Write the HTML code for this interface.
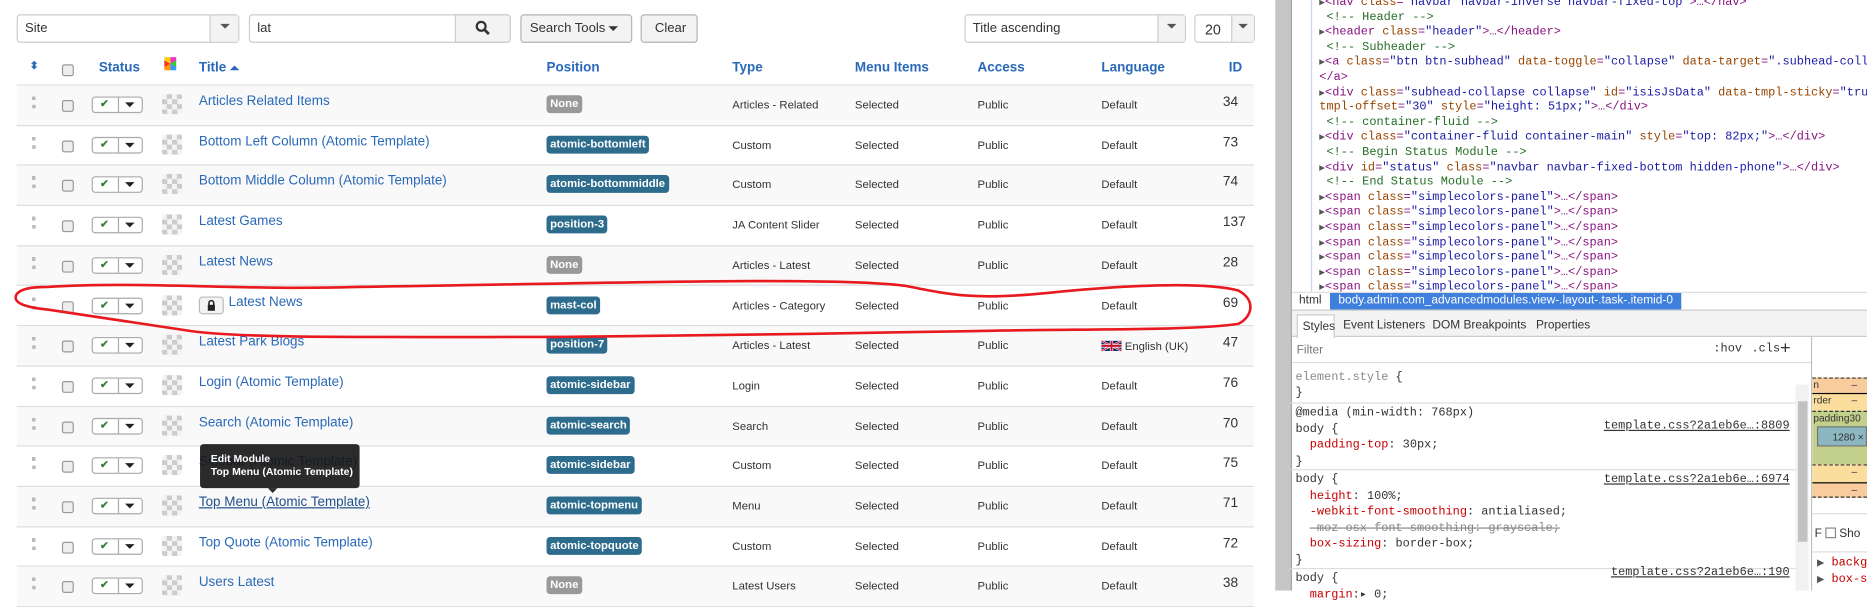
<!DOCTYPE html>
<html><head><meta charset="utf-8"><style>
*{box-sizing:border-box;margin:0;padding:0}
html,body{width:1867px;height:590px;overflow:hidden;background:#fff}
#w{position:absolute;left:0;top:0;width:1568px;height:496px;transform:scale(1.19069);transform-origin:0 0;font-family:"Liberation Sans",Arial,sans-serif;color:#333}
.a{position:absolute}
.inp{position:absolute;border:1px solid #ccc;border-radius:3px;background:#fff;height:24px;font-size:11px;padding:5px 6px;color:#333;white-space:nowrap}
.btn{position:absolute;border:1px solid #b3b3b3;border-radius:3px;background:#f3f3f3;height:24px;font-size:11px;padding:5px 7px;color:#333;white-space:nowrap}
.car{display:inline-block;width:0;height:0;border-left:4px solid transparent;border-right:4px solid transparent;border-top:4px solid #333;vertical-align:middle}
.hd{position:absolute;top:45px;left:14px;width:1039px;height:27px;border-bottom:1px solid #ddd;font-size:11.3px;font-weight:bold;color:#2a69b8}
.hd span{position:absolute;top:6px;white-space:nowrap}
.r{position:absolute;left:14px;width:1039px;height:33.7px;border-bottom:1px solid #ddd;font-size:11px;white-space:nowrap}
.r:nth-child(odd){background:#f9f9f9}
.r>*{position:absolute}
.dr{left:13px;top:9px;width:3px;height:10px;border-left:3px dotted #bbb}
.cb{left:38px;top:12px;width:10px;height:10px;border:1px solid #999;border-radius:2px;background:#eee}
.st{left:63px;top:9px;width:43px;height:14px;border:1px solid #aaa;border-radius:3px;background:#fff}
.st i{position:absolute;left:6px;top:0;color:#378137;font-style:normal;font-size:9px;font-weight:bold}
.st b{position:absolute;left:21px;top:0;bottom:0;border-left:1px solid #aaa}
.st .car{position:absolute;left:27px;top:4px;border-top-color:#222}
.ck{left:122px;top:7px;width:17px;height:17px;border-radius:2px;background:conic-gradient(#ccc 25%,#f4f4f4 0 50%,#ccc 0 75%,#f4f4f4 0);background-size:8.5px 8.5px}
.t{left:153px;top:7px;color:#2a69b8;font-size:11.3px}
.p{left:445px;top:8px;background:#2d6c8c;color:#fff;font-size:9.5px;font-weight:bold;padding:2px 3px;border-radius:3px}
.p.n{background:#999}
.ty{left:601px;top:11px;font-size:9.5px}
.mi{left:704px;top:11px;font-size:9.5px}
.ac{left:807px;top:11px;font-size:9.5px}
.la{left:911px;top:11px;font-size:9.5px}
.id{left:1013px;top:8px;font-size:11.5px}
.dt{position:absolute;left:1084px;top:0;width:484px;height:245px;font-family:"Liberation Mono","DejaVu Sans Mono",monospace;font-size:10px;overflow:hidden}
.dt div{height:12.6px;line-height:12.6px;white-space:pre}
.tg{color:#881280}.an{color:#994500}.av{color:#1a1aa6}.cm{color:#236e25}.tr{color:#555;font-size:8px}
.sty{position:absolute;left:1084px;top:305px;width:424px;font-family:"Liberation Mono","DejaVu Sans Mono",monospace;font-size:10px}
.sty div{white-space:pre}
.pn{color:#c80000}.lk{position:absolute;right:5px;text-decoration:underline;color:#333}
</style></head><body><div id="w">

<div class="inp" style="left:14px;top:12px;width:187px">Site</div>
<div class="a" style="left:176px;top:13px;width:24px;height:22px;border-left:1px solid #ccc;background:#f3f3f3;text-align:center;line-height:18px"><span class="car" style="border-top-color:#555"></span></div>
<div class="inp" style="left:209px;top:12px;width:220px">lat</div>
<div class="btn" style="left:382px;top:12px;width:47px;border-color:#ccc;border-radius:0 3px 3px 0;padding:4px 0 0 16px"><svg width="13" height="13" viewBox="0 0 14 14"><circle cx="5.5" cy="5.5" r="4" fill="none" stroke="#333" stroke-width="2"/><path d="M8.5 8.5L12.5 12.5" stroke="#333" stroke-width="2.5"/></svg></div>
<div class="btn" style="left:437px;top:12px;width:94px">Search Tools <span class="car"></span></div>
<div class="btn" style="left:538px;top:12px;width:48px;padding-left:11px">Clear</div>
<div class="inp" style="left:810px;top:12px;width:186px">Title ascending</div>
<div class="a" style="left:972px;top:13px;width:23px;height:22px;border-left:1px solid #ccc;background:#f3f3f3;text-align:center;line-height:18px"><span class="car" style="border-top-color:#555"></span></div>
<div class="inp" style="left:1003px;top:12px;width:51px;font-size:12px;padding-left:8px">20</div>
<div class="a" style="left:1034px;top:13px;width:19px;height:22px;border-left:1px solid #ccc;background:#f3f3f3;text-align:center;line-height:18px"><span class="car" style="border-top-color:#555"></span></div>

<div class="hd">
<span style="left:11px;top:5px;font-size:9px">&#x2B0D;</span>
<span style="left:38px;top:9px;width:10px;height:10px;border:1px solid #999;border-radius:2px;background:#eee"></span>
<span style="left:69px">Status</span>
<span style="left:124px;top:3px;width:10px;height:11px;background:conic-gradient(#e3c 0 17%,#3c3 0 33%,#39f 0 50%,#f90 0 67%,#e33 0 83%,#fc0 0);"></span>
<span style="left:153px">Title <span class="car" style="border-top:0;border-bottom:4px solid #2a69b8;position:static"></span></span>
<span style="left:445px">Position</span><span style="left:601px">Type</span><span style="left:704px">Menu Items</span><span style="left:807px">Access</span><span style="left:911px">Language</span><span style="left:1018px">ID</span>
</div>

<div class="a" style="left:0;top:72px">
<div class="r" style="top:0"><i class="dr"></i><i class="cb"></i><div class="st"><i>✔</i><b></b><span class="car"></span></div><i class="ck"></i><span class="t">Articles Related Items</span><span class="p n">None</span><span class="ty">Articles - Related</span><span class="mi">Selected</span><span class="ac">Public</span><span class="la">Default</span><span class="id">34</span></div>
<div class="r" style="top:33.7px"><i class="dr"></i><i class="cb"></i><div class="st"><i>✔</i><b></b><span class="car"></span></div><i class="ck"></i><span class="t">Bottom Left Column (Atomic Template)</span><span class="p">atomic-bottomleft</span><span class="ty">Custom</span><span class="mi">Selected</span><span class="ac">Public</span><span class="la">Default</span><span class="id">73</span></div>
<div class="r" style="top:67.4px"><i class="dr"></i><i class="cb"></i><div class="st"><i>✔</i><b></b><span class="car"></span></div><i class="ck"></i><span class="t">Bottom Middle Column (Atomic Template)</span><span class="p">atomic-bottommiddle</span><span class="ty">Custom</span><span class="mi">Selected</span><span class="ac">Public</span><span class="la">Default</span><span class="id">74</span></div>
<div class="r" style="top:101.1px"><i class="dr"></i><i class="cb"></i><div class="st"><i>✔</i><b></b><span class="car"></span></div><i class="ck"></i><span class="t">Latest Games</span><span class="p">position-3</span><span class="ty">JA Content Slider</span><span class="mi">Selected</span><span class="ac">Public</span><span class="la">Default</span><span class="id">137</span></div>
<div class="r" style="top:134.8px"><i class="dr"></i><i class="cb"></i><div class="st"><i>✔</i><b></b><span class="car"></span></div><i class="ck"></i><span class="t">Latest News</span><span class="p n">None</span><span class="ty">Articles - Latest</span><span class="mi">Selected</span><span class="ac">Public</span><span class="la">Default</span><span class="id">28</span></div>
<div class="r" style="top:168.5px"><i class="dr"></i><i class="cb"></i><div class="st"><i>✔</i><b></b><span class="car"></span></div><i class="ck"></i><span style="left:153px;top:8px;width:21px;height:15px;border:1px solid #bbb;border-radius:3px;background:#f3f3f3"><svg width="19" height="13" viewBox="0 0 19 13"><rect x="6.5" y="6" width="6" height="5" fill="#222"/><path d="M7.5 6.5V4.5a2 2 0 0 1 4 0V6.5" fill="none" stroke="#222" stroke-width="1.3"/></svg></span><span class="t" style="left:178px">Latest News</span><span class="p">mast-col</span><span class="ty">Articles - Category</span><span class="mi">Selected</span><span class="ac">Public</span><span class="la">Default</span><span class="id">69</span></div>
<div class="r" style="top:202.2px"><i class="dr"></i><i class="cb"></i><div class="st"><i>✔</i><b></b><span class="car"></span></div><i class="ck"></i><span class="t">Latest Park Blogs</span><span class="p">position-7</span><span class="ty">Articles - Latest</span><span class="mi">Selected</span><span class="ac">Public</span><span class="la"><svg width="17" height="11" viewBox="0 0 60 30" style="vertical-align:-2px"><rect width="60" height="30" fill="#012169"/><path d="M0 0L60 30M60 0L0 30" stroke="#fff" stroke-width="6"/><path d="M0 0L60 30M60 0L0 30" stroke="#c8102e" stroke-width="3"/><path d="M30 0V30M0 15H60" stroke="#fff" stroke-width="10"/><path d="M30 0V30M0 15H60" stroke="#c8102e" stroke-width="6"/></svg> English (UK)</span><span class="id">47</span></div>
<div class="r" style="top:235.9px"><i class="dr"></i><i class="cb"></i><div class="st"><i>✔</i><b></b><span class="car"></span></div><i class="ck"></i><span class="t">Login (Atomic Template)</span><span class="p">atomic-sidebar</span><span class="ty">Login</span><span class="mi">Selected</span><span class="ac">Public</span><span class="la">Default</span><span class="id">76</span></div>
<div class="r" style="top:269.6px"><i class="dr"></i><i class="cb"></i><div class="st"><i>✔</i><b></b><span class="car"></span></div><i class="ck"></i><span class="t">Search (Atomic Template)</span><span class="p">atomic-search</span><span class="ty">Search</span><span class="mi">Selected</span><span class="ac">Public</span><span class="la">Default</span><span class="id">70</span></div>
<div class="r" style="top:303.3px"><i class="dr"></i><i class="cb"></i><div class="st"><i>✔</i><b></b><span class="car"></span></div><i class="ck"></i><span class="t">Sidebar (Atomic Template)</span><span class="p">atomic-sidebar</span><span class="ty">Custom</span><span class="mi">Selected</span><span class="ac">Public</span><span class="la">Default</span><span class="id">75</span></div>
<div class="r" style="top:337px"><i class="dr"></i><i class="cb"></i><div class="st"><i>✔</i><b></b><span class="car"></span></div><i class="ck"></i><span class="t" style="text-decoration:underline;color:#1f4f8a">Top Menu (Atomic Template)</span><span class="p">atomic-topmenu</span><span class="ty">Menu</span><span class="mi">Selected</span><span class="ac">Public</span><span class="la">Default</span><span class="id">71</span></div>
<div class="r" style="top:370.7px"><i class="dr"></i><i class="cb"></i><div class="st"><i>✔</i><b></b><span class="car"></span></div><i class="ck"></i><span class="t">Top Quote (Atomic Template)</span><span class="p">atomic-topquote</span><span class="ty">Custom</span><span class="mi">Selected</span><span class="ac">Public</span><span class="la">Default</span><span class="id">72</span></div>
<div class="r" style="top:404.4px"><i class="dr"></i><i class="cb"></i><div class="st"><i>✔</i><b></b><span class="car"></span></div><i class="ck"></i><span class="t">Users Latest</span><span class="p n">None</span><span class="ty">Latest Users</span><span class="mi">Selected</span><span class="ac">Public</span><span class="la">Default</span><span class="id">38</span></div>
</div>

<div class="a" style="left:168px;top:373px;width:134px;height:37px;background:rgba(20,20,20,.9);border-radius:3px;color:#fff;font-size:8.8px;font-weight:bold;padding:7px 9px;line-height:11px;white-space:nowrap">Edit Module<br>Top Menu (Atomic Template)</div>
<div class="a" style="left:225px;top:410px;width:0;height:0;border-left:4px solid transparent;border-right:4px solid transparent;border-top:4px solid rgba(20,20,20,.9)"></div>

<svg class="a" style="left:0;top:0" width="1070" height="300"><path d="M40 241 C120 236 200 244 300 241 C500 238 700 232 760 240 C800 248 820 252 880 246 C940 240 1010 236 1040 244 C1055 252 1052 266 1040 272 C1000 278 900 276 820 278 C700 280 600 282 470 283 C300 283 200 284 160 278 C120 272 80 266 40 260 C20 258 10 254 14 247 C18 242 28 241 40 241" fill="none" stroke="#e8191f" stroke-width="2.2"/></svg>

<div class="a" style="left:1054px;top:0;width:17px;height:496px;background:#fff"></div>
<div class="a" style="left:1071px;top:0;width:13px;height:496px;background:#c6c6c6"></div>
<div class="a" style="left:1084px;top:0;width:1px;height:496px;background:#999"></div>

<div class="a" style="left:1101px;top:0;width:1px;height:245px;background:#c4d8f0"></div>
<div class="dt">
<div style="margin-top:-3px">    <span class="tr">▶</span><span class="tg">&lt;nav </span><span class="an">class</span><span class="tg">=</span><span class="av">"navbar navbar-inverse navbar-fixed-top"</span><span class="tg">&gt;…&lt;/nav&gt;</span></div>
<div>     <span class="cm">&lt;!-- Header --&gt;</span></div>
<div>    <span class="tr">▶</span><span class="tg">&lt;header </span><span class="an">class</span><span class="tg">=</span><span class="av">"header"</span><span class="tg">&gt;…&lt;/header&gt;</span></div>
<div>     <span class="cm">&lt;!-- Subheader --&gt;</span></div>
<div>    <span class="tr">▶</span><span class="tg">&lt;a </span><span class="an">class</span><span class="tg">=</span><span class="av">"btn btn-subhead"</span> <span class="an">data-toggle</span><span class="tg">=</span><span class="av">"collapse"</span> <span class="an">data-target</span><span class="tg">=</span><span class="av">".subhead-collapse"</span><span class="tg">&gt;</span></div>
<div>    <span class="tg">&lt;/a&gt;</span></div>
<div>    <span class="tr">▶</span><span class="tg">&lt;div </span><span class="an">class</span><span class="tg">=</span><span class="av">"subhead-collapse collapse"</span> <span class="an">id</span><span class="tg">=</span><span class="av">"isisJsData"</span> <span class="an">data-tmpl-sticky</span><span class="tg">=</span><span class="av">"true"</span> <span class="an">data-</span></div>
<div>    <span class="an">tmpl-offset</span><span class="tg">=</span><span class="av">"30"</span> <span class="an">style</span><span class="tg">=</span><span class="av">"height: 51px;"</span><span class="tg">&gt;…&lt;/div&gt;</span></div>
<div>     <span class="cm">&lt;!-- container-fluid --&gt;</span></div>
<div>    <span class="tr">▶</span><span class="tg">&lt;div </span><span class="an">class</span><span class="tg">=</span><span class="av">"container-fluid container-main"</span> <span class="an">style</span><span class="tg">=</span><span class="av">"top: 82px;"</span><span class="tg">&gt;…&lt;/div&gt;</span></div>
<div>     <span class="cm">&lt;!-- Begin Status Module --&gt;</span></div>
<div>    <span class="tr">▶</span><span class="tg">&lt;div </span><span class="an">id</span><span class="tg">=</span><span class="av">"status"</span> <span class="an">class</span><span class="tg">=</span><span class="av">"navbar navbar-fixed-bottom hidden-phone"</span><span class="tg">&gt;…&lt;/div&gt;</span></div>
<div>     <span class="cm">&lt;!-- End Status Module --&gt;</span></div>
<div>    <span class="tr">▶</span><span class="tg">&lt;span </span><span class="an">class</span><span class="tg">=</span><span class="av">"simplecolors-panel"</span><span class="tg">&gt;…&lt;/span&gt;</span></div>
<div>    <span class="tr">▶</span><span class="tg">&lt;span </span><span class="an">class</span><span class="tg">=</span><span class="av">"simplecolors-panel"</span><span class="tg">&gt;…&lt;/span&gt;</span></div>
<div>    <span class="tr">▶</span><span class="tg">&lt;span </span><span class="an">class</span><span class="tg">=</span><span class="av">"simplecolors-panel"</span><span class="tg">&gt;…&lt;/span&gt;</span></div>
<div>    <span class="tr">▶</span><span class="tg">&lt;span </span><span class="an">class</span><span class="tg">=</span><span class="av">"simplecolors-panel"</span><span class="tg">&gt;…&lt;/span&gt;</span></div>
<div>    <span class="tr">▶</span><span class="tg">&lt;span </span><span class="an">class</span><span class="tg">=</span><span class="av">"simplecolors-panel"</span><span class="tg">&gt;…&lt;/span&gt;</span></div>
<div>    <span class="tr">▶</span><span class="tg">&lt;span </span><span class="an">class</span><span class="tg">=</span><span class="av">"simplecolors-panel"</span><span class="tg">&gt;…&lt;/span&gt;</span></div>
<div>    <span class="tr">▶</span><span class="tg">&lt;span </span><span class="an">class</span><span class="tg">=</span><span class="av">"simplecolors-panel"</span><span class="tg">&gt;…&lt;/span&gt;</span></div>
</div>

<div class="a" style="left:1085px;top:245px;width:483px;height:15px;background:#fff;border-top:1px solid #ddd;font-size:10px;line-height:14px;white-space:nowrap;overflow:hidden"><span style="position:absolute;left:6px">html</span><span style="position:absolute;left:32px;top:0;width:295px;height:14px;background:#3f7fde;color:#fff;padding-left:7px">body.admin.com_advancedmodules.view-.layout-.task-.itemid-0</span></div>
<div class="a" style="left:1085px;top:260px;width:483px;height:23px;background:#f3f3f3;border-top:1px solid #ccc;border-bottom:1px solid #ccc;font-size:10px;color:#333;white-space:nowrap">
<span style="position:absolute;left:4px;top:3px;width:32px;height:20px;background:#fff;border:1px solid #ccc;border-bottom:0;padding:4px 0 0 4px">Styles</span>
<span style="position:absolute;left:43px;top:7px">Event Listeners</span><span style="position:absolute;left:118px;top:7px">DOM Breakpoints</span><span style="position:absolute;left:205px;top:7px">Properties</span></div>
<div class="a" style="left:1085px;top:283px;width:437px;height:22px;border-bottom:1px solid #ddd;font-size:10px;color:#777"><span style="position:absolute;left:4px;top:6px">Filter</span><span style="position:absolute;left:354px;top:5px;color:#333;font-family:'Liberation Mono',monospace;font-size:10px">:hov</span><span style="position:absolute;left:386px;top:5px;color:#333;font-family:'Liberation Mono',monospace;font-size:10px">.cls</span><span style="position:absolute;left:410px;top:1px;color:#333;font-size:15px">+</span></div>

<div class="sty">
<div style="position:absolute;left:4px;top:6px;line-height:13px"><span style="color:#888">element.style</span> {<br>}</div>
<div class="a" style="left:0;top:33px;width:424px;border-top:1px solid #ddd"></div>
<div style="position:absolute;left:4px;top:36px;line-height:13.5px">@media (min-width: 768px)<br>body {<br>  <span class="pn">padding-top</span>: 30px;<br>}</div>
<span class="lk" style="top:48px">template.css?2a1eb6e…:8809</span>
<div class="a" style="left:0;top:89px;width:424px;border-top:1px solid #ddd"></div>
<div style="position:absolute;left:4px;top:92px;line-height:13.5px">body {<br>  <span class="pn">height</span>: 100%;<br>  <span class="pn">-webkit-font-smoothing</span>: antialiased;<br>  <span style="text-decoration:line-through;color:#888">-moz-osx-font-smoothing: grayscale;</span><br>  <span class="pn">box-sizing</span>: border-box;<br>}</div>
<span class="lk" style="top:93px">template.css?2a1eb6e…:6974</span>
<div class="a" style="left:0;top:172px;width:424px;border-top:1px solid #ddd"></div>
<div style="position:absolute;left:4px;top:175px;line-height:13.5px">body {<br>  <span class="pn">margin</span>:▸ 0;</div>
<span class="lk" style="top:171px">template.css?2a1eb6e…:190</span>
</div>
<div class="a" style="left:1508px;top:323px;width:11px;height:173px;background:#f1f1f1"></div>
<div class="a" style="left:1510px;top:337px;width:8px;height:118px;background:#c1c1c1"></div>
<div class="a" style="left:1521px;top:283px;width:1px;height:213px;background:#bbb"></div>
<div class="a" style="left:1522px;top:283px;width:46px;height:213px;background:#fff;font-size:8.5px;color:#333;white-space:nowrap;overflow:hidden">
<div class="a" style="left:0;top:34px;width:46px;height:13px;background:#f9cc9d;border-top:1px dashed #333;padding-left:1px">n <span style="position:absolute;left:33px">–</span></div>
<div class="a" style="left:0;top:47px;width:46px;height:15px;background:#fbdd9d;border-top:1px solid #000;padding-left:1px">rder <span style="position:absolute;left:33px">–</span></div>
<div class="a" style="left:0;top:62px;width:46px;height:45px;background:#c3d08b;border-top:1px dashed #333;padding-left:1px">padding30</div>
<div class="a" style="left:4px;top:75px;width:42px;height:17px;background:#8cb6c0;border:1px solid #777;padding:3px 0 0 12px">1280 ×</div>
<div class="a" style="left:0;top:107px;width:46px;height:15px;background:#fbdd9d;border-top:1px dashed #333;padding-left:33px">–</div>
<div class="a" style="left:0;top:122px;width:46px;height:13px;background:#f9cc9d;border-top:1px solid #000;border-bottom:1px dashed #333;padding-left:33px">–</div>
<div class="a" style="left:0;top:148px;width:46px;border-top:1px solid #ddd"></div>
<div class="a" style="left:2px;top:160px;font-size:10px">F <span style="display:inline-block;width:9px;height:9px;border:1px solid #888;vertical-align:-1px"></span> Sho</div>
<div class="a" style="left:0;top:180px;width:46px;border-top:1px solid #ddd"></div>
<div class="a" style="left:4px;top:184px;font-family:'Liberation Mono',monospace;font-size:10px;line-height:14px"><span class="tr">▶</span> <span class="pn">backgr</span><br><span class="tr">▶</span> <span class="pn">box-si</span></div>
</div>

</div></body></html>
